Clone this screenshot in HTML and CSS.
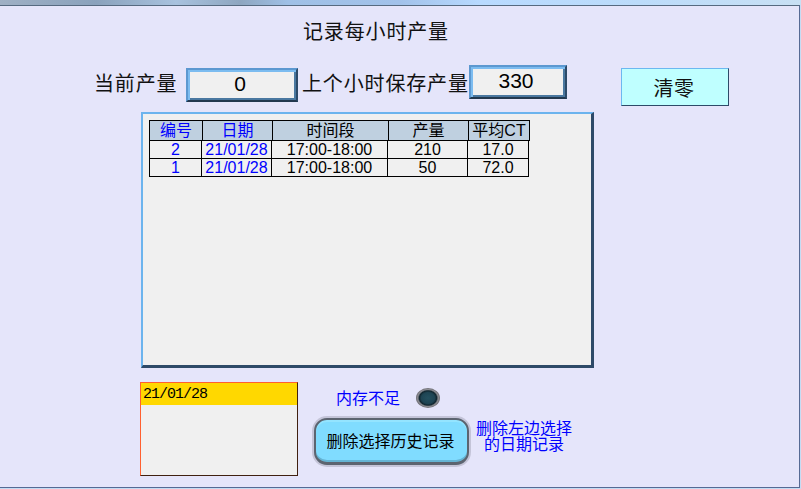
FILE: index.html
```html
<!DOCTYPE html>
<html lang="zh">
<head>
<meta charset="utf-8">
<title>记录每小时产量</title>
<link rel="stylesheet" href="styles.css">
</head>
<body>
<div class="titlebar"></div>
<main class="panel">
  <h1 class="title">记录每小时产量</h1>
  <span class="label label-current">当前产量</span>
  <output class="value value-current">0</output>
  <span class="label label-last">上个小时保存产量</span>
  <output class="value value-last">330</output>
  <button class="clear">清零</button>

  <section class="records">
    <div class="row head">
      <div class="cell link">编号</div>
      <div class="cell link">日期</div>
      <div class="cell">时间段</div>
      <div class="cell">产量</div>
      <div class="cell">平均CT</div>
    </div>
    <div class="row data">
      <div class="cell link">2</div>
      <div class="cell link">21/01/28</div>
      <div class="cell">17:00-18:00</div>
      <div class="cell">210</div>
      <div class="cell">17.0</div>
    </div>
    <div class="row data">
      <div class="cell link">1</div>
      <div class="cell link">21/01/28</div>
      <div class="cell">17:00-18:00</div>
      <div class="cell">50</div>
      <div class="cell">72.0</div>
    </div>
  </section>

  <section class="dates">
    <div class="date selected">21/01/28</div>
  </section>

  <span class="memory">内存不足</span>
  <span class="led"></span>
  <button class="delete">删除选择历史记录</button>
  <p class="hint">删除左边选择<br>的日期记录</p>
</main>
</body>
</html>
```
FILE: styles.css
```css
* { box-sizing: border-box; }
html, body { margin: 0; padding: 0; }
body {
  width: 801px;
  height: 489px;
  overflow: hidden;
  background: #c4dcf4;
  font-family: "Noto Sans CJK SC", "Liberation Sans", sans-serif;
}
.titlebar {
  height: 5px;
  background: linear-gradient(90deg, #9fb0c4 0, #8aa2bc 12%, #a8c2de 22%, #8ea6c0 30%, #9fc0e6 36%, #a2c2ea 50%, #b8daff 60%, #bcdcfa 80%, #c8e0f4 100%);
}
.panel {
  position: relative;
  width: 800px;
  height: 483px;
  background: #e5e5fa;
  border-top: 1px solid #566a80;
  border-right: 1px solid #566a94;
  border-bottom: 1px solid #566a94;
}
.title {
  position: absolute;
  left: 303px;
  top: 14px;
  margin: 0;
  font-size: 20px;
  font-weight: 400;
  letter-spacing: 0.85px;
  line-height: 22px;
  white-space: nowrap;
  color: #111;
}
.label {
  position: absolute;
  font-size: 20px;
  letter-spacing: 0.85px;
  line-height: 22px;
  white-space: nowrap;
  color: #111;
}
.label-current { left: 94px; top: 66px; }
.label-last { left: 302px; top: 66px; }
.value {
  position: absolute;
  display: flex;
  align-items: center;
  justify-content: center;
  height: 34px;
  padding: 0 4px 2px 0;
  background: #f0f0f0;
  border-width: 2px;
  border-style: solid;
  border-color: #5c98d0 #2c4a68 #22384e #5c98d0;
  box-shadow: inset 2px 2px 0 #7cbcf0, inset -2px -2px 0 #4a78a0;
  font-family: "Liberation Sans", sans-serif;
  font-size: 21px;
  color: #000;
}
.value-current { left: 186px; top: 62px; width: 112px; }
.value-last { left: 469px; top: 59px; width: 98px; }
.clear {
  position: absolute;
  left: 621px;
  top: 62px;
  width: 108px;
  height: 38px;
  padding: 0 2px 0 0;
  background: #bfffff;
  border-width: 1px;
  border-style: solid;
  border-color: #6cb8f0 #2e4a68 #2e4a68 #6cb8f0;
  font-family: inherit;
  font-size: 20px;
  letter-spacing: 0.5px;
  color: #111;
}
.records {
  position: absolute;
  left: 141px;
  top: 106px;
  width: 453px;
  height: 256px;
  padding: 6px 0 0 6px;
  background: #f0f0f0;
  border-width: 2px 3px 3px 2px;
  border-style: solid;
  border-color: #6cb4ee #2e4a68 #2e4a68 #6cb4ee;
  font-family: "Liberation Sans", "Noto Sans CJK SC", sans-serif;
  font-size: 16px;
  color: #000;
}
.row {
  display: grid;
  border-left: 1px solid #000;
  border-bottom: 1px solid #000;
}
.head {
  width: 381px;
  height: 21px;
  border-top: 1px solid #000;
  grid-template-columns: 53px 70px 116px 80px 61px;
  background: #bfd0e0;
}
.data {
  width: 380px;
  height: 18px;
  grid-template-columns: 52px 70px 116px 80px 61px;
}
.cell {
  display: flex;
  align-items: center;
  justify-content: center;
  border-right: 1px solid #000;
  line-height: 16px;
  white-space: nowrap;
  overflow: hidden;
}
.link { color: #0000ff; }
.dates {
  position: absolute;
  left: 140px;
  top: 376px;
  width: 158px;
  height: 94px;
  background: #f0f0f0;
  border-width: 1px;
  border-style: solid;
  border-color: #ff6030 #402010 #402010 #ff6030;
}
.date {
  height: 22px;
  padding: 3px 0 0 2px;
  font-family: "Liberation Mono", monospace;
  font-size: 15px;
  letter-spacing: -1px;
  line-height: 18px;
  color: #000;
}
.selected { background: #ffd800; }
.memory {
  position: absolute;
  left: 336px;
  top: 382px;
  font-size: 16px;
  line-height: 18px;
  color: #0000ff;
}
.led {
  position: absolute;
  left: 416px;
  top: 382px;
  width: 24px;
  height: 20px;
  border-radius: 50%;
  background: radial-gradient(closest-side, #24505f 0, #1e4453 55%, #11262f 72%, #8e8e94 85%, #6a6a70 100%);
}
.delete {
  position: absolute;
  left: 314px;
  top: 412px;
  width: 155px;
  height: 47px;
  padding: 0 2px 3px 0;
  border-radius: 13px;
  background: #80dcff;
  border-width: 2px 2px 3px;
  border-style: solid;
  border-color: #5c6470;
  box-shadow: 0 0 0 2px #c4c4d8, inset 0 2px 0 #94e4ff, inset 0 -2px 0 #64b4d4;
  font-family: inherit;
  font-size: 16px;
  color: #000;
}
.hint {
  position: absolute;
  left: 476px;
  top: 413px;
  width: 96px;
  margin: 0;
  font-size: 16px;
  line-height: 16px;
  text-align: center;
  color: #0000ff;
}
```
